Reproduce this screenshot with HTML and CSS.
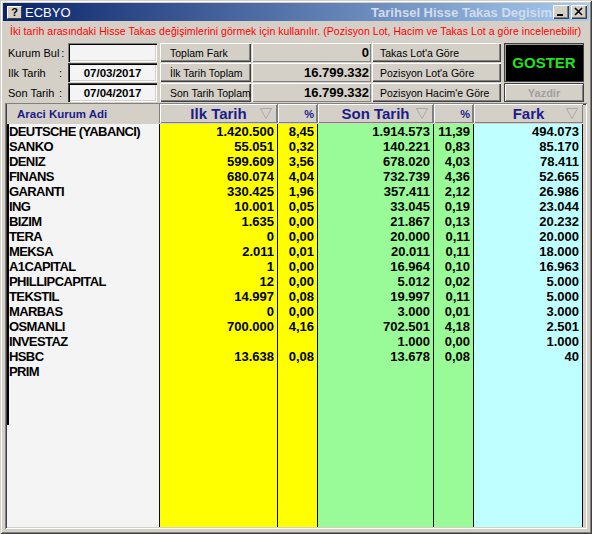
FILE: index.html
```html
<!DOCTYPE html>
<html>
<head>
<meta charset="utf-8">
<link rel="stylesheet" href="styles.css">
</head>
<body>
<div class="window">
  <div class="titlebar">
    <span class="appicon">?</span>
    <span class="apptitle">ECBYO</span>
    <span class="subtitle">Tarihsel Hisse Takas Degisim</span>
    <span class="capbtns">
      <span class="capbtn"><svg width="16" height="14" viewBox="0 0 16 14"><rect x="4" y="9" width="6" height="2" fill="#000"/></svg></span>
      <span class="capbtn"><svg width="16" height="14" viewBox="0 0 16 14"><path d="M4 3 L11 10 M11 3 L4 10" stroke="#000" stroke-width="1.6" fill="none"/></svg></span>
    </span>
  </div>
  <div class="message">İki tarih arasındaki Hisse Takas değişimlerini görmek için kullanılır. (Pozisyon Lot, Hacim ve Takas Lot a göre incelenebilir)</div>
  <div class="controls">
    <div class="lbl"><span>Kurum Bul</span><span>:</span></div>
    <div class="field"></div>
    <div class="btn lbtn">Toplam Fark</div>
    <div class="valbox">0</div>
    <div class="btn rbtn">Takas Lot'a Göre</div>
    <div class="goster">GOSTER</div>

    <div class="lbl"><span>Ilk Tarih</span><span>:</span></div>
    <div class="field date">07/03/2017</div>
    <div class="btn lbtn">İlk Tarih Toplam</div>
    <div class="valbox">16.799.332</div>
    <div class="btn rbtn">Pozisyon Lot'a Göre</div>

    <div class="lbl"><span>Son Tarih</span><span>:</span></div>
    <div class="field date">07/04/2017</div>
    <div class="btn lbtn">Son Tarih Toplam</div>
    <div class="valbox">16.799.332</div>
    <div class="btn rbtn">Pozisyon Hacim'e Göre</div>
    <div class="yazdir">Yazdir</div>
  </div>
  <div class="grid">
    <div class="table">
      <div class="h hname">Araci Kurum Adi</div>
      <div class="h hbig"><span></span><span>Ilk Tarih</span><svg class="tri" width="12" height="11" viewBox="0 0 12 11"><path d="M0.5 0.5 H11.5 L6 10.5 Z" fill="none" stroke="#a8a8a8"/></svg></div>
      <div class="h hpct">%</div>
      <div class="h hbig"><span></span><span>Son Tarih</span><svg class="tri" width="12" height="11" viewBox="0 0 12 11"><path d="M0.5 0.5 H11.5 L6 10.5 Z" fill="none" stroke="#a8a8a8"/></svg></div>
      <div class="h hpct">%</div>
      <div class="h hbig"><span></span><span>Fark</span><svg class="tri" width="12" height="11" viewBox="0 0 12 11"><path d="M0.5 0.5 H11.5 L6 10.5 Z" fill="none" stroke="#a8a8a8"/></svg></div>

      <div class="c nm">DEUTSCHE (YABANCI)</div><div class="c y">1.420.500</div><div class="c y">8,45</div><div class="c g">1.914.573</div><div class="c g">11,39</div><div class="c b">494.073</div>
      <div class="c nm">SANKO</div><div class="c y">55.051</div><div class="c y">0,32</div><div class="c g">140.221</div><div class="c g">0,83</div><div class="c b">85.170</div>
      <div class="c nm">DENIZ</div><div class="c y">599.609</div><div class="c y">3,56</div><div class="c g">678.020</div><div class="c g">4,03</div><div class="c b">78.411</div>
      <div class="c nm">FINANS</div><div class="c y">680.074</div><div class="c y">4,04</div><div class="c g">732.739</div><div class="c g">4,36</div><div class="c b">52.665</div>
      <div class="c nm">GARANTI</div><div class="c y">330.425</div><div class="c y">1,96</div><div class="c g">357.411</div><div class="c g">2,12</div><div class="c b">26.986</div>
      <div class="c nm">ING</div><div class="c y">10.001</div><div class="c y">0,05</div><div class="c g">33.045</div><div class="c g">0,19</div><div class="c b">23.044</div>
      <div class="c nm">BIZIM</div><div class="c y">1.635</div><div class="c y">0,00</div><div class="c g">21.867</div><div class="c g">0,13</div><div class="c b">20.232</div>
      <div class="c nm">TERA</div><div class="c y">0</div><div class="c y">0,00</div><div class="c g">20.000</div><div class="c g">0,11</div><div class="c b">20.000</div>
      <div class="c nm">MEKSA</div><div class="c y">2.011</div><div class="c y">0,01</div><div class="c g">20.011</div><div class="c g">0,11</div><div class="c b">18.000</div>
      <div class="c nm">A1CAPITAL</div><div class="c y">1</div><div class="c y">0,00</div><div class="c g">16.964</div><div class="c g">0,10</div><div class="c b">16.963</div>
      <div class="c nm">PHILLIPCAPITAL</div><div class="c y">12</div><div class="c y">0,00</div><div class="c g">5.012</div><div class="c g">0,02</div><div class="c b">5.000</div>
      <div class="c nm">TEKSTIL</div><div class="c y">14.997</div><div class="c y">0,08</div><div class="c g">19.997</div><div class="c g">0,11</div><div class="c b">5.000</div>
      <div class="c nm">MARBAS</div><div class="c y">0</div><div class="c y">0,00</div><div class="c g">3.000</div><div class="c g">0,01</div><div class="c b">3.000</div>
      <div class="c nm">OSMANLI</div><div class="c y">700.000</div><div class="c y">4,16</div><div class="c g">702.501</div><div class="c g">4,18</div><div class="c b">2.501</div>
      <div class="c nm">INVESTAZ</div><div class="c y"></div><div class="c y"></div><div class="c g">1.000</div><div class="c g">0,00</div><div class="c b">1.000</div>
      <div class="c nm">HSBC</div><div class="c y">13.638</div><div class="c y">0,08</div><div class="c g">13.678</div><div class="c g">0,08</div><div class="c b">40</div>
      <div class="c nm">PRIM</div><div class="c y"></div><div class="c y"></div><div class="c g"></div><div class="c g"></div><div class="c b"></div>

      <div class="c nm filler"></div><div class="c y"></div><div class="c y"></div><div class="c g"></div><div class="c g"></div><div class="c b"></div>
    </div>
  </div>
</div>
</body>
</html>
```
FILE: styles.css
```css
* { box-sizing: border-box; }
body { margin: 0; font-family: "Liberation Sans", Arial, sans-serif; background: #d4d0c8; }

.window {
  width: 592px; height: 534px; padding: 3px;
  background: #d4d0c8;
  box-shadow: inset 1px 1px 0 #d4d0c8, inset -1px -1px 0 #404040, inset 2px 2px 0 #fff, inset -2px -2px 0 #808080;
  display: flex; flex-direction: column; overflow: hidden;
}

.titlebar {
  height: 18px; flex: none;
  display: flex; align-items: center;
  background: linear-gradient(to right, #0a246a, #a6caf0);
  padding: 0 2px 0 4px;
}
.appicon {
  width: 15px; height: 13px;
  background: #d4d0c8;
  border: 1px solid; border-color: #fff #404040 #404040 #fff;
  font-size: 11px; font-weight: bold; line-height: 11px; text-align: center; color: #000;
}
.apptitle { color: #fff; font-size: 13px; margin-left: 3px; }
.subtitle {
  margin-left: auto; margin-right: 1px; white-space: nowrap;
  color: #d2dcea; font-size: 13px; font-weight: bold;
}
.capbtns { display: flex; gap: 2px; }
.capbtn {
  width: 16px; height: 14px; display: block;
  background: #d4d0c8;
  box-shadow: inset 1px 1px 0 #fff, inset -1px -1px 0 #404040, inset -2px -2px 0 #808080;
}
.capbtn svg { display: block; }

.message {
  height: 20px; line-height: 20px; flex: none;
  padding-left: 7px; color: #f00; font-size: 10.5px; letter-spacing: 0.05px; white-space: nowrap;
}

.controls {
  flex: none;
  display: grid;
  grid-template-columns: 60px 92px 92px 120px 132px 80px;
  grid-template-rows: repeat(3, 19px);
  row-gap: 1px;
  margin: 2px 0 0 5px;
  font-size: 10.5px; color: #000;
}
.lbl {
  width: 54px; display: flex; justify-content: space-between; align-items: center;
  font-size: 11px; white-space: nowrap; gap: 2px;
}
.field {
  margin-right: 3px;
  background: #f4f4f4;
  box-shadow: inset 1px 1px 0 #808080, inset 2px 2px 0 #000, inset -1px -1px 0 #fff, inset -2px -2px 0 #d4d0c8;
  display: flex; align-items: center; justify-content: center;
  font-size: 11.5px; font-weight: bold;
}
.field.date { box-shadow: inset 1px 1px 0 #404040, inset 2px 2px 0 #000, inset -1px -1px 0 #fff, inset -2px -2px 0 #d4d0c8; }
.btn {
  background: #d4d0c8;
  box-shadow: inset 1px 1px 0 #fff, inset -1px -1px 0 #404040, inset -2px -2px 0 #808080;
  display: flex; align-items: center; overflow: hidden; white-space: nowrap;
}
.lbtn { margin-right: 1px; padding-left: 10px; }
.rbtn { margin-right: 3px; padding-left: 8px; }
.valbox {
  margin-right: 1px;
  background: #d4d0c8;
  box-shadow: inset 1px 1px 0 #fff, inset -1px -1px 0 #808080;
  display: flex; align-items: center; justify-content: flex-end;
  padding-right: 2px; font-size: 13px; font-weight: bold;
}
.goster {
  grid-row: span 2;
  background: #000; color: #22e022;
  border: 1px solid #404040;
  box-shadow: inset 1px 1px 0 #9a9a9a;
  display: flex; align-items: center; justify-content: center;
  font-size: 15px; font-weight: bold;
}
.yazdir {
  background: #d4d0c8; color: #a0a0a0;
  border: 1px solid #404040;
  box-shadow: inset 1px 1px 0 #fff, inset -1px -1px 0 #808080;
  display: flex; align-items: center; justify-content: center;
  font-size: 11px; font-weight: bold;
}

.grid {
  flex: 1; margin: 1px 0 2px 2px; width: 582px;
  padding: 1px 2px 2px 2px;
  background: #d4d0c8;
  box-shadow: inset 1px 1px 0 #808080, inset -1px -1px 0 #fff, inset 2px 2px 0 #404040, inset -2px -2px 0 #d4d0c8;
}
.table {
  height: 100%;
  display: grid;
  grid-template-columns: 152px 118px 40px 116px 40px 110px;
  grid-template-rows: 20px repeat(17, 15px) 1fr;
}
.h {
  background: #d4d0c8; color: #1c1c8a; font-weight: bold;
  border-left: 1px solid #808080;
  box-shadow: inset 1px 1px 0 #fff, inset -1px -1px 0 #808080;
  height: 19px;
  display: flex; align-items: center;
}
.hname { border-left: none; box-shadow: none; font-size: 11.5px; padding-left: 10px; }
.hbig {
  display: grid; grid-template-columns: 1fr auto 1fr; align-items: center;
  font-size: 15px;
}
.hbig .tri { justify-self: end; margin-right: 5px; }
.hpct { justify-content: flex-end; padding-right: 3px; font-size: 11px; }

.c {
  font-size: 13px; font-weight: bold; line-height: 15px; color: #000;
  white-space: nowrap; overflow: hidden;
}
.nm { background: #f4f4f4; padding-left: 0; letter-spacing: -0.6px; border-left: 2px solid #000; }
.nm.filler { border-left: none; background: linear-gradient(to right, #000 2px, #f4f4f4 2px) left top / 100% 46px no-repeat, #f4f4f4; }
.y, .g, .b { border-left: 1px solid #000; text-align: right; padding-right: 3px; }
.y { background: #ff0; }
.g { background: #98fb98; }
.b { background: #c0ffff; border-right: 1px solid #000; }
```
